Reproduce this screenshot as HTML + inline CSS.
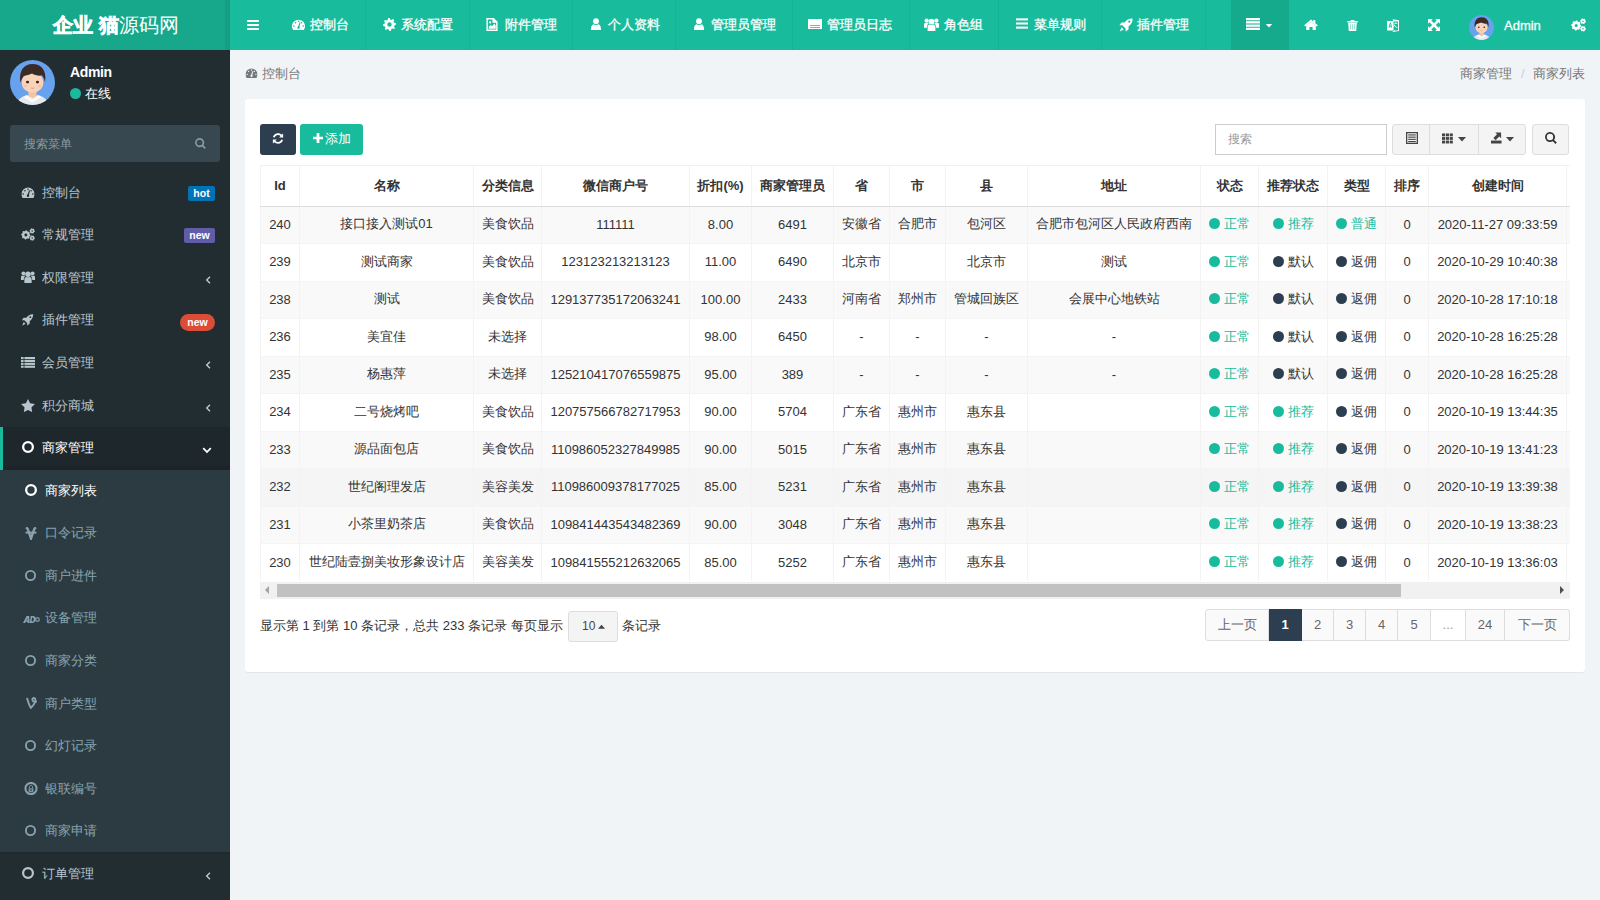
<!DOCTYPE html>
<html><head><meta charset="utf-8">
<style>
*{box-sizing:border-box;margin:0;padding:0}
html,body{width:1600px;height:900px;overflow:hidden}
body{font-family:"Liberation Sans",sans-serif;font-size:13px;color:#333;background:#f1f4f6;position:relative}
.abs{position:absolute}
svg{display:block}
#logo{left:0;top:0;width:230px;height:50px;background:linear-gradient(90deg,#17a88b 0,#17a88b 225px,#169e83 225px,#169e83 230px);color:#fff;font-size:20px;line-height:50px}
#nav{left:230px;top:0;width:1370px;height:50px;background:#18bc9c;color:#fff}
#nav .tx{-webkit-text-stroke:0.3px #fff}
.tab{position:absolute;top:0;height:50px;border-left:1px solid rgba(0,0,0,0.05)}
.ic{position:absolute}
.tx{position:absolute;white-space:nowrap}
#side{left:0;top:50px;width:230px;height:850px;background:#222d32;color:#b8c7ce}
.badge{position:absolute;color:#fff;font-weight:bold;font-size:10.5px;text-align:center;border-radius:2px;line-height:15px;height:15px}
#panel{left:245px;top:99px;width:1340px;height:573px;background:#fff;border-radius:3px;box-shadow:0 1px 1px rgba(0,0,0,0.06)}
#tbl{position:absolute;left:260px;top:165px;width:1310px;height:417px;overflow:hidden;border-top:1px solid #f0f0f0}
table{border-collapse:collapse;table-layout:fixed}
th{font-weight:bold;height:40px;padding-bottom:0 !important;border-left:1px solid #f3f3f3;border-bottom:1px solid #ddd;text-align:center;white-space:nowrap;overflow:hidden;color:#333;padding:0}
td{height:37.5px;padding-bottom:1px !important;border-left:1px solid #f3f3f3;border-top:1px solid #f4f4f4;text-align:center;white-space:nowrap;overflow:hidden;color:#333;padding:0}
tbody tr:nth-child(odd) td{background:#f9f9f9}
tbody tr:nth-child(8) td{background:#f5f5f5}
.g{color:#18bc9c}
.dot{display:inline-block;width:11px;height:11px;border-radius:50%;vertical-align:-1px;margin-right:4px}
.pg{position:absolute;top:609px;height:32px;border:1px solid #ddd;border-left:none;background:#fafafa;color:#666;text-align:center;line-height:29px;font-size:14px}
.btn{position:absolute;border-radius:3px}
</style></head><body>

<div id="logo" class="abs"><span class="tx" style="left:53px;top:0"><b style="-webkit-text-stroke:0.7px #fff">企业 猫</b>源码网</span></div>
<div id="nav" class="abs">
<div class="ic" style="left:17px;top:20px"><svg width="12" height="10" viewBox="0 0 14 12" fill="currentColor" ><rect x="0" y="0" width="14" height="2.4"/><rect x="0" y="4.8" width="14" height="2.4"/><rect x="0" y="9.6" width="14" height="2.4"/></svg></div>
<div class="ic" style="left:62px;top:19px"><svg width="13" height="11" viewBox="0 0 13.2 11" fill="currentColor" ><defs><mask id="dm1"><path fill="#fff" d="M1.2 11A6.6 6.6 0 1 1 12 11Z"/><g fill="#000"><circle cx="1.8" cy="7.0" r="0.8"/><circle cx="3.5" cy="3.7" r="0.8"/><circle cx="6.6" cy="2.2" r="0.8"/><circle cx="9.7" cy="3.7" r="0.8"/><circle cx="11.4" cy="7.0" r="0.8"/><circle cx="6.6" cy="8.7" r="1.2"/><path d="M5.9 8.5L7.7 3.3 8.6 3.6 7.3 8.9Z"/></g></mask></defs><rect width="13.2" height="11" mask="url(#dm1)"/></svg></div>
<span class="tx" style="left:80px;top:17px;line-height:16px">控制台</span>
<div class="abs" style="left:134.5px;top:0;width:1px;height:50px;background:rgba(0,0,0,0.05)"></div>
<div class="ic" style="left:153px;top:18px"><svg width="13" height="13" viewBox="0 0 13 13" fill="currentColor" ><path fill-rule="evenodd" d="M12.88,5.23 L13.00,6.50 L11.31,7.46 L11.03,8.38 L11.90,10.11 L11.10,11.10 L9.22,10.57 L8.38,11.03 L7.77,12.88 L6.50,13.00 L5.54,11.31 L4.62,11.03 L2.89,11.90 L1.90,11.10 L2.43,9.22 L1.97,8.38 L0.12,7.77 L0.00,6.50 L1.69,5.54 L1.97,4.62 L1.10,2.89 L1.90,1.90 L3.78,2.43 L4.62,1.97 L5.23,0.12 L6.50,0.00 L7.46,1.69 L8.38,1.97 L10.11,1.10 L11.10,1.90 L10.57,3.78 L11.03,4.62Z M6.5 4.3A2.2 2.2 0 1 0 6.5 8.7A2.2 2.2 0 1 0 6.5 4.3Z"/></svg></div>
<span class="tx" style="left:171px;top:17px;line-height:16px">系统配置</span>
<div class="abs" style="left:238.60000000000002px;top:0;width:1px;height:50px;background:rgba(0,0,0,0.05)"></div>
<div class="ic" style="left:256px;top:18px"><svg width="12" height="13" viewBox="0 0 12 14" fill="currentColor" ><path fill-rule="evenodd" d="M0 0h8l4 4v10H0z M1.5 1.5v11h9V5H6.5V1.5z"/><path d="M2.5 11.5v-2l2-2 1.5 1.5 2.5-3 1.5 2v3.5z"/><circle cx="4" cy="4.8" r="1.2"/></svg></div>
<span class="tx" style="left:274.5px;top:17px;line-height:16px">附件管理</span>
<div class="abs" style="left:341.70000000000005px;top:0;width:1px;height:50px;background:rgba(0,0,0,0.05)"></div>
<div class="ic" style="left:361px;top:18px"><svg width="10" height="12" viewBox="0 0 11 13" fill="currentColor" ><circle cx="5.5" cy="3.4" r="3.2"/><path d="M0 13c0-3.5 0.8-5.8 2.6-6.3 0.8 0.6 1.8 0.9 2.9 0.9s2.1-0.3 2.9-0.9C10.2 7.2 11 9.5 11 13z"/></svg></div>
<span class="tx" style="left:378px;top:17px;line-height:16px">个人资料</span>
<div class="abs" style="left:444.5px;top:0;width:1px;height:50px;background:rgba(0,0,0,0.05)"></div>
<div class="ic" style="left:464px;top:18px"><svg width="10" height="12" viewBox="0 0 11 13" fill="currentColor" ><circle cx="5.5" cy="3.4" r="3.2"/><path d="M0 13c0-3.5 0.8-5.8 2.6-6.3 0.8 0.6 1.8 0.9 2.9 0.9s2.1-0.3 2.9-0.9C10.2 7.2 11 9.5 11 13z"/></svg></div>
<span class="tx" style="left:481px;top:17px;line-height:16px">管理员管理</span>
<div class="abs" style="left:562px;top:0;width:1px;height:50px;background:rgba(0,0,0,0.05)"></div>
<div class="ic" style="left:578px;top:19px"><svg width="14" height="10" viewBox="0 0 14 10" fill="currentColor" ><path fill-rule="evenodd" d="M0 0h14v10H0z M2 6h10v0.8H2z M2 8h10v0.8H2z"/><path d="M2 3.5h10v0.6H2z" fill-opacity="0"/></svg></div>
<span class="tx" style="left:597px;top:17px;line-height:16px">管理员日志</span>
<div class="abs" style="left:678.5px;top:0;width:1px;height:50px;background:rgba(0,0,0,0.05)"></div>
<div class="ic" style="left:694px;top:18px"><svg width="15" height="13" viewBox="0 0 15 13" fill="currentColor" ><circle cx="7.5" cy="3.6" r="2.9"/><path d="M3.6 13V9.2c0-1.6 0.9-2.6 2.3-2.7 0.5 0.3 1 0.4 1.6 0.4s1.1-0.1 1.6-0.4c1.4 0.1 2.3 1.1 2.3 2.7V13z"/><circle cx="2.6" cy="2.6" r="2.1"/><circle cx="12.4" cy="2.6" r="2.1"/><path d="M0 9.8V6.6c0-1.1 0.7-1.8 1.6-1.8 0.3 0.2 0.6 0.3 1 0.3s0.7-0.1 1-0.3c0.5 0 0.9 0.2 1.2 0.5C3.7 6 3 7.3 3 9v0.8z"/><path d="M15 9.8V6.6c0-1.1-0.7-1.8-1.6-1.8-0.3 0.2-0.6 0.3-1 0.3s-0.7-0.1-1-0.3c-0.5 0-0.9 0.2-1.2 0.5C11.3 6 12 7.3 12 9v0.8z"/></svg></div>
<span class="tx" style="left:713.5px;top:17px;line-height:16px">角色组</span>
<div class="abs" style="left:767.6px;top:0;width:1px;height:50px;background:rgba(0,0,0,0.05)"></div>
<div class="ic" style="left:786px;top:18px"><svg width="12" height="11" viewBox="0 0 14 12" fill="currentColor" ><rect x="0" y="0" width="14" height="2.4"/><rect x="0" y="4.8" width="14" height="2.4"/><rect x="0" y="9.6" width="14" height="2.4"/></svg></div>
<span class="tx" style="left:804px;top:17px;line-height:16px">菜单规则</span>
<div class="abs" style="left:870.8px;top:0;width:1px;height:50px;background:rgba(0,0,0,0.05)"></div>
<div class="ic" style="left:889px;top:18px"><svg width="14" height="14" viewBox="0 0 14 14" fill="currentColor" ><path d="M13.6 0.4C10.5 0.2 7.6 1.6 5.6 4.4H2.5L0.4 7.3h2.9l3.3 3.3v2.9l2.9-2.1V8.4c2.8-2 4.2-4.9 4.1-8z M10.3 2.6a1.1 1.1 0 1 1 0 2.2a1.1 1.1 0 1 1 0-2.2z"/><path d="M2.6 9.3l2.1 2.1-3.9 2.2z"/></svg></div>
<span class="tx" style="left:907px;top:17px;line-height:16px">插件管理</span>
<div class="abs" style="left:974.7px;top:0;width:1px;height:50px;background:rgba(0,0,0,0.05)"></div>
<div class="abs" style="left:1001px;top:0;width:58px;height:50px;background:#16aa8d"></div>
<div class="ic" style="left:1016px;top:18px"><svg width="14" height="12" viewBox="0 0 14 12" fill="currentColor" ><rect x="0" y="0" width="14" height="2.3"/><rect x="0" y="3.2" width="14" height="2.3"/><rect x="0" y="6.5" width="14" height="2.3"/><rect x="0" y="9.7" width="14" height="2.3"/></svg></div>
<div class="ic" style="left:1035px;top:24px"><svg width="8" height="4" viewBox="0 0 8 5" fill="currentColor" ><path d="M0 0h8L4 4.5z"/></svg></div>
<div class="ic" style="left:1074px;top:19px"><svg width="14" height="11" viewBox="0 0 14 11" fill="currentColor" ><path d="M7 0.6L0.2 6.3l1 1.1L7 2.6l5.8 4.8 1-1.1L11.3 4.2V1h-2v1.5z"/><path d="M2.2 6.6L7 2.8l4.8 3.8V11H8.6V7.9H5.4V11H2.2z"/></svg></div>
<div class="ic" style="left:1117px;top:20px"><svg width="11" height="11" viewBox="0 0 11 11.5" fill="currentColor" ><path d="M3.8 0h3.4l0.5 1H11v1.5H0V1h3.3z"/><path fill-rule="evenodd" d="M1 3h9l-0.6 8.5H1.6z M3.2 4.5v5.5h0.7V4.5z M5.15 4.5v5.5h0.7V4.5z M7.1 4.5v5.5h0.7V4.5z" /><path d="M3.2 4.5v5.5h0.7V4.5z M5.15 4.5v5.5h0.7V4.5z M7.1 4.5v5.5h0.7V4.5z" fill-opacity="0.6"/></svg></div>
<div class="ic" style="left:1157px;top:19px"><svg width="12" height="13" viewBox="0 0 12 13" fill="currentColor" ><path fill-rule="evenodd" d="M0 2h6.5v9.5H0z M1.6 8.8l1.3-5h1l1.3 5H4.3L4 7.7H2.8l-0.3 1.1z M3 6.8h0.9L3.4 4.8z"/><path fill-rule="evenodd" d="M5.5 0.3L12 1.2v10.9l-6.5 0.9 1-1.5H11V2.4H6.5z M7.3 4h3v0.8h-3z M8.4 3.2h0.8v0.8H8.4z M7.6 5.4c0.5 1.3 1.4 2.3 2.9 2.8l-0.3 0.7C8.9 8.4 8.1 7.7 7.5 6.8c-0.4 0.7-0.9 1.3-1.6 1.8L5.6 8c1-0.7 1.5-1.5 1.7-2.6z"/></svg></div>
<div class="ic" style="left:1198px;top:19px"><svg width="12" height="12" viewBox="0 0 13 13" fill="currentColor" ><path d="M0 0h5.2L3.6 1.6 6.5 4.5 9.4 1.6 7.8 0H13v5.2L11.4 3.6 8.5 6.5l2.9 2.9 1.6-1.6V13H7.8l1.6-1.6L6.5 8.5 3.6 11.4 5.2 13H0V7.8l1.6 1.6L4.5 6.5 1.6 3.6 0 5.2z"/></svg></div>
<div class="ic" style="left:1239px;top:15px"><svg width="25" height="25" viewBox="0 0 100 100" fill="currentColor" ><defs><clipPath id="cp25"><circle cx="50" cy="50" r="50"/></clipPath></defs>
<circle cx="50" cy="50" r="50" fill="#66a2ee"/>
<g clip-path="url(#cp25)">
<path d="M14 100c3-12 10-18 22-21l14-2 14 2c12 3 19 9 22 21z" fill="#e9e9ec"/>
<path d="M41 62h18v18l-9 5-9-5z" fill="#f4c3a1"/>
<path d="M36 78l14 9 14-9 5 5-19 12-19-12z" fill="#fbfbfb"/>
<ellipse cx="50" cy="50" rx="24" ry="23" fill="#f9d3b9"/>
<path d="M23 50c-4-26 8-41 27-41s32 13 28 40c-2-7-4-12-7-15-6 2-16 0-22-4-5 3-13 4-19 6-3 4-5 9-7 14z" fill="#3b2a26"/>
<ellipse cx="39" cy="49" rx="3.6" ry="3" fill="#3b2a26"/><ellipse cx="61" cy="49" rx="3.6" ry="3" fill="#3b2a26"/>
<path d="M46 62q4 2 8 0" stroke="#d8957a" stroke-width="2" fill="none"/>
<ellipse cx="34" cy="58" rx="4" ry="2.4" fill="#f6b5a0" opacity=".7"/><ellipse cx="66" cy="58" rx="4" ry="2.4" fill="#f6b5a0" opacity=".7"/>
</g></svg></div>
<span class="tx" style="left:1274px;top:18px;line-height:16px;font-size:13px">Admin</span>
<div class="ic" style="left:1341px;top:18px"><svg width="15" height="14" viewBox="0 0 15 14" fill="currentColor" ><path fill-rule="evenodd" d="M10.20,7.50 L10.10,8.48 L9.08,9.11 L8.69,9.83 L8.74,11.04 L7.98,11.66 L6.81,11.38 L6.02,11.62 L5.20,12.50 L4.22,12.40 L3.59,11.38 L2.87,10.99 L1.66,11.04 L1.04,10.28 L1.32,9.11 L1.08,8.32 L0.20,7.50 L0.30,6.52 L1.32,5.89 L1.71,5.17 L1.66,3.96 L2.42,3.34 L3.59,3.62 L4.38,3.38 L5.20,2.50 L6.18,2.60 L6.81,3.62 L7.53,4.01 L8.74,3.96 L9.36,4.72 L9.08,5.89 L9.32,6.68Z M6.80,7.50A1.6 1.6 0 1 0 3.60,7.50A1.6 1.6 0 1 0 6.80,7.50Z"/><path fill-rule="evenodd" d="M14.90,3.20 L14.80,3.95 L14.08,4.40 L13.70,4.90 L13.45,5.71 L12.75,6.00 L12.00,5.60 L11.38,5.52 L10.55,5.71 L9.95,5.25 L9.92,4.40 L9.68,3.82 L9.10,3.20 L9.20,2.45 L9.92,2.00 L10.30,1.50 L10.55,0.69 L11.25,0.40 L12.00,0.80 L12.62,0.88 L13.45,0.69 L14.05,1.15 L14.08,2.00 L14.32,2.58Z M12.80,3.20A0.8 0.8 0 1 0 11.20,3.20A0.8 0.8 0 1 0 12.80,3.20Z"/><path fill-rule="evenodd" d="M14.90,10.80 L14.80,11.55 L14.08,12.00 L13.70,12.50 L13.45,13.31 L12.75,13.60 L12.00,13.20 L11.38,13.12 L10.55,13.31 L9.95,12.85 L9.92,12.00 L9.68,11.42 L9.10,10.80 L9.20,10.05 L9.92,9.60 L10.30,9.10 L10.55,8.29 L11.25,8.00 L12.00,8.40 L12.62,8.48 L13.45,8.29 L14.05,8.75 L14.08,9.60 L14.32,10.18Z M12.80,10.80A0.8 0.8 0 1 0 11.20,10.80A0.8 0.8 0 1 0 12.80,10.80Z"/></svg></div>
</div>
<div id="side" class="abs">
<div class="ic" style="left:10px;top:10px"><svg width="45" height="45" viewBox="0 0 100 100" fill="currentColor" ><defs><clipPath id="cp45"><circle cx="50" cy="50" r="50"/></clipPath></defs>
<circle cx="50" cy="50" r="50" fill="#66a2ee"/>
<g clip-path="url(#cp45)">
<path d="M14 100c3-12 10-18 22-21l14-2 14 2c12 3 19 9 22 21z" fill="#e9e9ec"/>
<path d="M41 62h18v18l-9 5-9-5z" fill="#f4c3a1"/>
<path d="M36 78l14 9 14-9 5 5-19 12-19-12z" fill="#fbfbfb"/>
<ellipse cx="50" cy="50" rx="24" ry="23" fill="#f9d3b9"/>
<path d="M23 50c-4-26 8-41 27-41s32 13 28 40c-2-7-4-12-7-15-6 2-16 0-22-4-5 3-13 4-19 6-3 4-5 9-7 14z" fill="#3b2a26"/>
<ellipse cx="39" cy="49" rx="3.6" ry="3" fill="#3b2a26"/><ellipse cx="61" cy="49" rx="3.6" ry="3" fill="#3b2a26"/>
<path d="M46 62q4 2 8 0" stroke="#d8957a" stroke-width="2" fill="none"/>
<ellipse cx="34" cy="58" rx="4" ry="2.4" fill="#f6b5a0" opacity=".7"/><ellipse cx="66" cy="58" rx="4" ry="2.4" fill="#f6b5a0" opacity=".7"/>
</g></svg></div>
<span class="tx" style="left:70px;top:14px;line-height:16px;font-size:14px;font-weight:bold;color:#fff;letter-spacing:-0.35px">Admin</span>
<div class="abs" style="left:70px;top:38px;width:11px;height:11px;border-radius:50%;background:#18bc9c"></div>
<span class="tx" style="left:85px;top:36px;line-height:16px;font-size:13px;color:#fff">在线</span>
<div class="abs" style="left:10px;top:75px;width:210px;height:37px;background:#374850;border-radius:3px"></div>
<span class="tx" style="left:24px;top:86px;line-height:16px;font-size:12px;color:#8b9ba2">搜索菜单</span>
<div class="ic" style="left:195px;top:88px;color:#8b9ba2"><svg width="11" height="11" viewBox="0 0 12 12" fill="currentColor" ><path fill-rule="evenodd" d="M5 0a5 5 0 0 1 4.1 7.9l2.7 2.7-1.3 1.3-2.7-2.7A5 5 0 1 1 5 0z M5 1.8a3.2 3.2 0 1 0 0 6.4a3.2 3.2 0 1 0 0-6.4z"/></svg></div>
<div class="ic" style="left:21px;top:136.7px;color:#b8c7ce"><svg width="14" height="11" viewBox="0 0 13.2 11" fill="currentColor" ><defs><mask id="dm2"><path fill="#fff" d="M1.2 11A6.6 6.6 0 1 1 12 11Z"/><g fill="#000"><circle cx="1.8" cy="7.0" r="0.8"/><circle cx="3.5" cy="3.7" r="0.8"/><circle cx="6.6" cy="2.2" r="0.8"/><circle cx="9.7" cy="3.7" r="0.8"/><circle cx="11.4" cy="7.0" r="0.8"/><circle cx="6.6" cy="8.7" r="1.2"/><path d="M5.9 8.5L7.7 3.3 8.6 3.6 7.3 8.9Z"/></g></mask></defs><rect width="13.2" height="11" mask="url(#dm2)"/></svg></div>
<span class="tx" style="left:42px;top:133.7px;line-height:17px;color:#b8c7ce">控制台</span>
<span class="badge" style="left:188px;top:135.7px;width:27px;background:#0073b7">hot</span>
<div class="ic" style="left:21px;top:178.26999999999998px;color:#b8c7ce"><svg width="14" height="13" viewBox="0 0 15 14" fill="currentColor" ><path fill-rule="evenodd" d="M10.20,7.50 L10.10,8.48 L9.08,9.11 L8.69,9.83 L8.74,11.04 L7.98,11.66 L6.81,11.38 L6.02,11.62 L5.20,12.50 L4.22,12.40 L3.59,11.38 L2.87,10.99 L1.66,11.04 L1.04,10.28 L1.32,9.11 L1.08,8.32 L0.20,7.50 L0.30,6.52 L1.32,5.89 L1.71,5.17 L1.66,3.96 L2.42,3.34 L3.59,3.62 L4.38,3.38 L5.20,2.50 L6.18,2.60 L6.81,3.62 L7.53,4.01 L8.74,3.96 L9.36,4.72 L9.08,5.89 L9.32,6.68Z M6.80,7.50A1.6 1.6 0 1 0 3.60,7.50A1.6 1.6 0 1 0 6.80,7.50Z"/><path fill-rule="evenodd" d="M14.90,3.20 L14.80,3.95 L14.08,4.40 L13.70,4.90 L13.45,5.71 L12.75,6.00 L12.00,5.60 L11.38,5.52 L10.55,5.71 L9.95,5.25 L9.92,4.40 L9.68,3.82 L9.10,3.20 L9.20,2.45 L9.92,2.00 L10.30,1.50 L10.55,0.69 L11.25,0.40 L12.00,0.80 L12.62,0.88 L13.45,0.69 L14.05,1.15 L14.08,2.00 L14.32,2.58Z M12.80,3.20A0.8 0.8 0 1 0 11.20,3.20A0.8 0.8 0 1 0 12.80,3.20Z"/><path fill-rule="evenodd" d="M14.90,10.80 L14.80,11.55 L14.08,12.00 L13.70,12.50 L13.45,13.31 L12.75,13.60 L12.00,13.20 L11.38,13.12 L10.55,13.31 L9.95,12.85 L9.92,12.00 L9.68,11.42 L9.10,10.80 L9.20,10.05 L9.92,9.60 L10.30,9.10 L10.55,8.29 L11.25,8.00 L12.00,8.40 L12.62,8.48 L13.45,8.29 L14.05,8.75 L14.08,9.60 L14.32,10.18Z M12.80,10.80A0.8 0.8 0 1 0 11.20,10.80A0.8 0.8 0 1 0 12.80,10.80Z"/></svg></div>
<span class="tx" style="left:42px;top:176.26999999999998px;line-height:17px;color:#b8c7ce">常规管理</span>
<span class="badge" style="left:184px;top:178.26999999999998px;width:31px;background:#605ca8">new</span>
<div class="ic" style="left:21px;top:219.83999999999997px;color:#b8c7ce"><svg width="14" height="14" viewBox="0 0 15 13" fill="currentColor" ><circle cx="7.5" cy="3.6" r="2.9"/><path d="M3.6 13V9.2c0-1.6 0.9-2.6 2.3-2.7 0.5 0.3 1 0.4 1.6 0.4s1.1-0.1 1.6-0.4c1.4 0.1 2.3 1.1 2.3 2.7V13z"/><circle cx="2.6" cy="2.6" r="2.1"/><circle cx="12.4" cy="2.6" r="2.1"/><path d="M0 9.8V6.6c0-1.1 0.7-1.8 1.6-1.8 0.3 0.2 0.6 0.3 1 0.3s0.7-0.1 1-0.3c0.5 0 0.9 0.2 1.2 0.5C3.7 6 3 7.3 3 9v0.8z"/><path d="M15 9.8V6.6c0-1.1-0.7-1.8-1.6-1.8-0.3 0.2-0.6 0.3-1 0.3s-0.7-0.1-1-0.3c-0.5 0-0.9 0.2-1.2 0.5C11.3 6 12 7.3 12 9v0.8z"/></svg></div>
<span class="tx" style="left:42px;top:218.83999999999997px;line-height:17px;color:#b8c7ce">权限管理</span>
<div class="ic" style="left:205px;top:224.83999999999997px;color:#b8c7ce"><svg width="6" height="10" viewBox="0 0 7 10" fill="currentColor" ><path d="M5.2 0.6L6.4 1.8 3.2 5l3.2 3.2-1.2 1.2L0.8 5z"/></svg></div>
<div class="ic" style="left:21px;top:264.40999999999997px;color:#b8c7ce"><svg width="13" height="12" viewBox="0 0 14 14" fill="currentColor" ><path d="M13.6 0.4C10.5 0.2 7.6 1.6 5.6 4.4H2.5L0.4 7.3h2.9l3.3 3.3v2.9l2.9-2.1V8.4c2.8-2 4.2-4.9 4.1-8z M10.3 2.6a1.1 1.1 0 1 1 0 2.2a1.1 1.1 0 1 1 0-2.2z"/><path d="M2.6 9.3l2.1 2.1-3.9 2.2z"/></svg></div>
<span class="tx" style="left:42px;top:261.40999999999997px;line-height:17px;color:#b8c7ce">插件管理</span>
<span class="badge" style="left:180px;top:264.40999999999997px;width:35px;height:17px;line-height:17px;border-radius:9px;background:#dd4b39">new</span>
<div class="ic" style="left:21px;top:306.98px;color:#b8c7ce"><svg width="14" height="11" viewBox="0 0 14 11" fill="currentColor" ><rect x="0" y="0.0" width="2.6" height="2.1"/><rect x="3.4" y="0.0" width="10.6" height="2.1"/><rect x="0" y="2.9" width="2.6" height="2.1"/><rect x="3.4" y="2.9" width="10.6" height="2.1"/><rect x="0" y="5.8" width="2.6" height="2.1"/><rect x="3.4" y="5.8" width="10.6" height="2.1"/><rect x="0" y="8.7" width="2.6" height="2.1"/><rect x="3.4" y="8.7" width="10.6" height="2.1"/></svg></div>
<span class="tx" style="left:42px;top:303.98px;line-height:17px;color:#b8c7ce">会员管理</span>
<div class="ic" style="left:205px;top:309.98px;color:#b8c7ce"><svg width="6" height="10" viewBox="0 0 7 10" fill="currentColor" ><path d="M5.2 0.6L6.4 1.8 3.2 5l3.2 3.2-1.2 1.2L0.8 5z"/></svg></div>
<div class="ic" style="left:21px;top:348.54999999999995px;color:#b8c7ce"><svg width="14" height="13" viewBox="0 0 14 13" fill="currentColor" ><path d="M7 0l2.1 4.3 4.8 0.7-3.5 3.4 0.8 4.7L7 10.9 2.8 13.1l0.8-4.7L0.1 5l4.8-0.7z"/></svg></div>
<span class="tx" style="left:42px;top:346.54999999999995px;line-height:17px;color:#b8c7ce">积分商城</span>
<div class="ic" style="left:205px;top:352.54999999999995px;color:#b8c7ce"><svg width="6" height="10" viewBox="0 0 7 10" fill="currentColor" ><path d="M5.2 0.6L6.4 1.8 3.2 5l3.2 3.2-1.2 1.2L0.8 5z"/></svg></div>
<div class="abs" style="left:0;top:376.62px;width:230px;height:43.5px;background:#1e282c;border-left:3px solid #18bc9c"></div>
<div class="abs" style="left:3px;top:416.12px;width:227px;height:4px;background:#1c2429"></div>
<div class="ic" style="left:22px;top:391.12px;color:#fff"><svg width="12" height="12" viewBox="0 0 12 12" fill="currentColor" ><circle cx="6" cy="6" r="4.85" fill="none" stroke="currentColor" stroke-width="2.3"/></svg></div>
<span class="tx" style="left:42px;top:389.12px;line-height:17px;color:#fff">商家管理</span>
<div class="ic" style="left:202px;top:397.12px;color:#fff"><svg width="10" height="7" viewBox="0 0 10 7" fill="currentColor" ><path d="M0.6 1.8L1.8 0.6 5 3.8 8.2 0.6 9.4 1.8 5 6.2z"/></svg></div>
<div class="abs" style="left:0;top:419.99px;width:230px;height:381.83px;background:#2c3b41"></div>
<div class="ic" style="left:25px;top:433.69px;color:#fff"><svg width="12" height="12" viewBox="0 0 12 12" fill="currentColor" ><circle cx="6" cy="6" r="4.85" fill="none" stroke="currentColor" stroke-width="2.3"/></svg></div>
<span class="tx" style="left:45px;top:431.69px;line-height:17px;color:#fff">商家列表</span>
<div class="ic" style="left:25px;top:477.26px;color:#8aa4af"><svg width="12" height="13" viewBox="0 0 12 13" fill="currentColor" ><path fill="none" stroke="currentColor" stroke-width="2.3" d="M0.9 0.6Q2.6 1.2 3 2.6L6 11.6 9 2.6Q9.4 1.2 11.1 0.6"/><rect x="0.6" y="4.6" width="10.8" height="2" /></svg></div>
<span class="tx" style="left:45px;top:474.26px;line-height:17px;color:#8aa4af">口令记录</span>
<div class="ic" style="left:25px;top:519.8299999999999px;color:#8aa4af"><svg width="11" height="11" viewBox="0 0 12 12" fill="currentColor" ><circle cx="6" cy="6" r="5.0" fill="none" stroke="currentColor" stroke-width="2"/></svg></div>
<span class="tx" style="left:45px;top:516.8299999999999px;line-height:17px;color:#8aa4af">商户进件</span>
<div class="ic" style="left:23px;top:566.4px;color:#8aa4af"><svg width="17" height="7" viewBox="0 0 17 7" fill="currentColor" ><path fill-rule="evenodd" d="M0 7L3.6 0H6.1L6.7 7H4.7L4.6 5.8H2.7L2.1 7Z M3.3 4.4H4.5L4.4 2Z"/><path fill-rule="evenodd" d="M6.9 7L7.7 0H10C12 0 12.9 1.5 12.7 3.5 12.4 5.7 11.1 7 9.1 7Z M9 1.4L8.6 5.6H9.1C10.1 5.6 10.7 4.8 10.8 3.5 10.9 2.2 10.4 1.4 9.7 1.4Z"/><path fill-rule="evenodd" d="M14.4 1A2.5 2.5 0 1 1 14.4 6A2.5 2.5 0 1 1 14.4 1Z M14.4 2.4A1.1 1.1 0 1 0 14.4 4.6A1.1 1.1 0 1 0 14.4 2.4Z" fill-opacity="0.8"/></svg></div>
<span class="tx" style="left:45px;top:559.4px;line-height:17px;color:#8aa4af">设备管理</span>
<div class="ic" style="left:25px;top:604.97px;color:#8aa4af"><svg width="11" height="11" viewBox="0 0 12 12" fill="currentColor" ><circle cx="6" cy="6" r="5.0" fill="none" stroke="currentColor" stroke-width="2"/></svg></div>
<span class="tx" style="left:45px;top:601.97px;line-height:17px;color:#8aa4af">商家分类</span>
<div class="ic" style="left:26px;top:646.54px;color:#8aa4af"><svg width="11" height="12" viewBox="0 0 11 12" fill="currentColor" ><path fill="none" stroke="currentColor" stroke-width="1.9" stroke-linecap="round" d="M1.2 1.6C2.2 5.2 3.2 8.6 4.9 10.9 7.4 8.4 9.3 5.4 9.4 3.2 9.5 1.5 8.6 0.9 7.7 1 6.6 1.1 6.2 2.2 6.5 3.3 6.9 4.7 8.4 5.1 10.2 4.6"/></svg></div>
<span class="tx" style="left:45px;top:644.54px;line-height:17px;color:#8aa4af">商户类型</span>
<div class="ic" style="left:25px;top:690.11px;color:#8aa4af"><svg width="11" height="11" viewBox="0 0 12 12" fill="currentColor" ><circle cx="6" cy="6" r="5.0" fill="none" stroke="currentColor" stroke-width="2"/></svg></div>
<span class="tx" style="left:45px;top:687.11px;line-height:17px;color:#8aa4af">幻灯记录</span>
<div class="ic" style="left:24px;top:731.6800000000001px;color:#8aa4af"><svg width="14" height="13" viewBox="0 0 14 13" fill="currentColor" ><circle cx="7" cy="6.5" r="5.6" fill="none" stroke="currentColor" stroke-width="2"/><path fill-rule="evenodd" d="M4.6 6.2h4.8v4H4.6z M6.4 7.3h1.2v1.8H6.4z" fill-opacity="0.85"/><path fill="none" stroke="currentColor" stroke-width="1" stroke-opacity="0.85" d="M5.5 6.2V4.8C5.5 3.9 6.1 3.3 7 3.3S8.5 3.9 8.5 4.8V6.2"/></svg></div>
<span class="tx" style="left:45px;top:729.6800000000001px;line-height:17px;color:#8aa4af">银联编号</span>
<div class="ic" style="left:25px;top:775.25px;color:#8aa4af"><svg width="11" height="11" viewBox="0 0 12 12" fill="currentColor" ><circle cx="6" cy="6" r="5.0" fill="none" stroke="currentColor" stroke-width="2"/></svg></div>
<span class="tx" style="left:45px;top:772.25px;line-height:17px;color:#8aa4af">商家申请</span>
<div class="abs" style="left:0;top:801.8199999999999px;width:230px;height:2px;background:#1f292e"></div>
<div class="ic" style="left:22px;top:816.8199999999999px;color:#b8c7ce"><svg width="12" height="12" viewBox="0 0 12 12" fill="currentColor" ><circle cx="6" cy="6" r="4.9" fill="none" stroke="currentColor" stroke-width="2.2"/></svg></div>
<span class="tx" style="left:42px;top:814.8199999999999px;line-height:17px;color:#b8c7ce">订单管理</span>
<div class="ic" style="left:205px;top:820.8199999999999px;color:#b8c7ce"><svg width="6" height="10" viewBox="0 0 7 10" fill="currentColor" ><path d="M5.2 0.6L6.4 1.8 3.2 5l3.2 3.2-1.2 1.2L0.8 5z"/></svg></div>
</div>
<div class="ic" style="left:245px;top:68px;color:#777"><svg width="13" height="10" viewBox="0 0 13.2 11" fill="currentColor" ><defs><mask id="dm3"><path fill="#fff" d="M1.2 11A6.6 6.6 0 1 1 12 11Z"/><g fill="#000"><circle cx="1.8" cy="7.0" r="0.8"/><circle cx="3.5" cy="3.7" r="0.8"/><circle cx="6.6" cy="2.2" r="0.8"/><circle cx="9.7" cy="3.7" r="0.8"/><circle cx="11.4" cy="7.0" r="0.8"/><circle cx="6.6" cy="8.7" r="1.2"/><path d="M5.9 8.5L7.7 3.3 8.6 3.6 7.3 8.9Z"/></g></mask></defs><rect width="13.2" height="11" mask="url(#dm3)"/></svg></div>
<span class="tx" style="left:262px;top:66px;line-height:16px;color:#777">控制台</span>
<span class="tx" style="left:1460px;top:66px;line-height:16px;color:#777">商家管理</span>
<span class="tx" style="left:1521px;top:66px;line-height:16px;color:#ccc">/</span>
<span class="tx" style="left:1533px;top:66px;line-height:16px;color:#777">商家列表</span>
<div id="panel" class="abs"></div>
<div class="btn" style="left:260px;top:124px;width:36px;height:31px;background:#2c3e50;color:#fff"><div class="ic" style="left:12px;top:9px"><svg width="12" height="11" viewBox="0 0 12 12" fill="currentColor" ><path d="M11.6 0.6v4.3H7.3l1.6-1.6C8.1 2.6 7.1 2.2 6 2.2c-1.7 0-3.1 1.1-3.6 2.6L0.5 4.3C1.2 1.8 3.4 0.2 6 0.2c1.6 0 3 0.6 4.1 1.6z"/><path d="M0.4 11.4V7.1h4.3L3.1 8.7C3.9 9.4 4.9 9.8 6 9.8c1.7 0 3.1-1.1 3.6-2.6l1.9 0.5C10.8 10.2 8.6 11.8 6 11.8c-1.6 0-3-0.6-4.1-1.6z"/></svg></div></div>
<div class="btn" style="left:300px;top:124px;width:63px;height:31px;background:#18bc9c;color:#fff"><div class="ic" style="left:13px;top:9px"><svg width="10" height="10" viewBox="0 0 11 11" fill="currentColor" ><path d="M4 0h3v4h4v3H7v4H4V7H0V4h4z"/></svg></div><span class="tx" style="left:25px;top:7px;line-height:16px">添加</span></div>
<div class="abs" style="left:1215px;top:124px;width:172px;height:31px;border:1px solid #ccc;background:#fff"></div>
<span class="tx" style="left:1228px;top:131px;line-height:16px;font-size:12px;color:#999">搜索</span>
<div class="btn" style="left:1392px;top:124px;width:134px;height:31px;background:#f4f4f4;border:1px solid #ddd"></div>
<div class="abs" style="left:1429px;top:125px;width:1px;height:29px;background:#ddd"></div>
<div class="abs" style="left:1478px;top:125px;width:1px;height:29px;background:#ddd"></div>
<div class="ic" style="left:1406px;top:132px;color:#444"><svg width="12" height="12" viewBox="0 0 12 12" fill="currentColor" ><path fill-rule="evenodd" d="M0 0h12v12H0z M1.3 1.3v9.4h9.4V1.3z"/><rect x="2.2" y="2.4" width="7.6" height="1.1"/><rect x="2.2" y="4.6" width="7.6" height="1.1"/><rect x="2.2" y="6.8" width="7.6" height="1.1"/><rect x="2.2" y="9" width="7.6" height="1.1"/></svg></div>
<div class="ic" style="left:1442px;top:133px;color:#444"><svg width="11" height="11" viewBox="0 0 12 11" fill="currentColor" ><rect x="0.0" y="0.0" width="3.4" height="3.1"/><rect x="4.2" y="0.0" width="3.4" height="3.1"/><rect x="8.4" y="0.0" width="3.4" height="3.1"/><rect x="0.0" y="3.9" width="3.4" height="3.1"/><rect x="4.2" y="3.9" width="3.4" height="3.1"/><rect x="8.4" y="3.9" width="3.4" height="3.1"/><rect x="0.0" y="7.8" width="3.4" height="3.1"/><rect x="4.2" y="7.8" width="3.4" height="3.1"/><rect x="8.4" y="7.8" width="3.4" height="3.1"/></svg></div>
<div class="ic" style="left:1458px;top:137px;color:#444"><svg width="8" height="5" viewBox="0 0 8 5" fill="currentColor" ><path d="M0 0h8L4 4.5z"/></svg></div>
<div class="ic" style="left:1491px;top:132px;color:#444"><svg width="11" height="12" viewBox="0 0 12 12" fill="currentColor" ><path d="M0 8.8h11.5V12H0z"/><path d="M4.6 0h6.4v6.4L9 4.4 5 8.4 2.6 6 6.6 2z"/></svg></div>
<div class="ic" style="left:1506px;top:137px;color:#444"><svg width="8" height="5" viewBox="0 0 8 5" fill="currentColor" ><path d="M0 0h8L4 4.5z"/></svg></div>
<div class="btn" style="left:1532px;top:124px;width:37px;height:31px;background:#f4f4f4;border:1px solid #ddd"></div>
<div class="ic" style="left:1545px;top:132px;color:#333"><svg width="12" height="12" viewBox="0 0 12 12" fill="currentColor" ><path fill-rule="evenodd" d="M5 0a5 5 0 0 1 4.1 7.9l2.7 2.7-1.3 1.3-2.7-2.7A5 5 0 1 1 5 0z M5 1.8a3.2 3.2 0 1 0 0 6.4a3.2 3.2 0 1 0 0-6.4z"/></svg></div>
<div id="tbl">
<table style="width:1486px"><colgroup><col style="width:39px"><col style="width:174px"><col style="width:68px"><col style="width:148px"><col style="width:62px"><col style="width:82px"><col style="width:56px"><col style="width:56px"><col style="width:82px"><col style="width:173px"><col style="width:58px"><col style="width:69px"><col style="width:58px"><col style="width:43px"><col style="width:138px"><col style="width:180px"></colgroup>
<thead><tr><th>Id</th><th>名称</th><th>分类信息</th><th>微信商户号</th><th>折扣(%)</th><th>商家管理员</th><th>省</th><th>市</th><th>县</th><th>地址</th><th>状态</th><th>推荐状态</th><th>类型</th><th>排序</th><th>创建时间</th><th>操作</th></tr></thead><tbody>
<tr><td>240</td><td>接口接入测试01</td><td>美食饮品</td><td>111111</td><td>8.00</td><td>6491</td><td>安徽省</td><td>合肥市</td><td>包河区</td><td>合肥市包河区人民政府西南</td><td><span class="g"><span class="dot" style="background:#18bc9c"></span>正常</span></td><td><span class="g"><span class="dot" style="background:#18bc9c"></span>推荐</span></td><td><span class="g"><span class="dot" style="background:#18bc9c"></span>普通</span></td><td>0</td><td>2020-11-27 09:33:59</td><td></td></tr>
<tr><td>239</td><td>测试商家</td><td>美食饮品</td><td>123123213213123</td><td>11.00</td><td>6490</td><td>北京市</td><td></td><td>北京市</td><td>测试</td><td><span class="g"><span class="dot" style="background:#18bc9c"></span>正常</span></td><td><span><span class="dot" style="background:#2c3e50"></span>默认</span></td><td><span><span class="dot" style="background:#2c3e50"></span>返佣</span></td><td>0</td><td>2020-10-29 10:40:38</td><td></td></tr>
<tr><td>238</td><td>测试</td><td>美食饮品</td><td>129137735172063241</td><td>100.00</td><td>2433</td><td>河南省</td><td>郑州市</td><td>管城回族区</td><td>会展中心地铁站</td><td><span class="g"><span class="dot" style="background:#18bc9c"></span>正常</span></td><td><span><span class="dot" style="background:#2c3e50"></span>默认</span></td><td><span><span class="dot" style="background:#2c3e50"></span>返佣</span></td><td>0</td><td>2020-10-28 17:10:18</td><td></td></tr>
<tr><td>236</td><td>美宜佳</td><td>未选择</td><td></td><td>98.00</td><td>6450</td><td>-</td><td>-</td><td>-</td><td>-</td><td><span class="g"><span class="dot" style="background:#18bc9c"></span>正常</span></td><td><span><span class="dot" style="background:#2c3e50"></span>默认</span></td><td><span><span class="dot" style="background:#2c3e50"></span>返佣</span></td><td>0</td><td>2020-10-28 16:25:28</td><td></td></tr>
<tr><td>235</td><td>杨惠萍</td><td>未选择</td><td>125210417076559875</td><td>95.00</td><td>389</td><td>-</td><td>-</td><td>-</td><td>-</td><td><span class="g"><span class="dot" style="background:#18bc9c"></span>正常</span></td><td><span><span class="dot" style="background:#2c3e50"></span>默认</span></td><td><span><span class="dot" style="background:#2c3e50"></span>返佣</span></td><td>0</td><td>2020-10-28 16:25:28</td><td></td></tr>
<tr><td>234</td><td>二号烧烤吧</td><td>美食饮品</td><td>120757566782717953</td><td>90.00</td><td>5704</td><td>广东省</td><td>惠州市</td><td>惠东县</td><td></td><td><span class="g"><span class="dot" style="background:#18bc9c"></span>正常</span></td><td><span class="g"><span class="dot" style="background:#18bc9c"></span>推荐</span></td><td><span><span class="dot" style="background:#2c3e50"></span>返佣</span></td><td>0</td><td>2020-10-19 13:44:35</td><td></td></tr>
<tr><td>233</td><td>源品面包店</td><td>美食饮品</td><td>110986052327849985</td><td>90.00</td><td>5015</td><td>广东省</td><td>惠州市</td><td>惠东县</td><td></td><td><span class="g"><span class="dot" style="background:#18bc9c"></span>正常</span></td><td><span class="g"><span class="dot" style="background:#18bc9c"></span>推荐</span></td><td><span><span class="dot" style="background:#2c3e50"></span>返佣</span></td><td>0</td><td>2020-10-19 13:41:23</td><td></td></tr>
<tr><td>232</td><td>世纪阁理发店</td><td>美容美发</td><td>110986009378177025</td><td>85.00</td><td>5231</td><td>广东省</td><td>惠州市</td><td>惠东县</td><td></td><td><span class="g"><span class="dot" style="background:#18bc9c"></span>正常</span></td><td><span class="g"><span class="dot" style="background:#18bc9c"></span>推荐</span></td><td><span><span class="dot" style="background:#2c3e50"></span>返佣</span></td><td>0</td><td>2020-10-19 13:39:38</td><td></td></tr>
<tr><td>231</td><td>小茶里奶茶店</td><td>美食饮品</td><td>109841443543482369</td><td>90.00</td><td>3048</td><td>广东省</td><td>惠州市</td><td>惠东县</td><td></td><td><span class="g"><span class="dot" style="background:#18bc9c"></span>正常</span></td><td><span class="g"><span class="dot" style="background:#18bc9c"></span>推荐</span></td><td><span><span class="dot" style="background:#2c3e50"></span>返佣</span></td><td>0</td><td>2020-10-19 13:38:23</td><td></td></tr>
<tr><td>230</td><td>世纪陆壹捌美妆形象设计店</td><td>美容美发</td><td>109841555212632065</td><td>85.00</td><td>5252</td><td>广东省</td><td>惠州市</td><td>惠东县</td><td></td><td><span class="g"><span class="dot" style="background:#18bc9c"></span>正常</span></td><td><span class="g"><span class="dot" style="background:#18bc9c"></span>推荐</span></td><td><span><span class="dot" style="background:#2c3e50"></span>返佣</span></td><td>0</td><td>2020-10-19 13:36:03</td><td></td></tr>
</tbody></table></div>
<div class="abs" style="left:260px;top:582px;width:1310px;height:17px;background:#f1f1f1"></div>
<div class="abs" style="left:277px;top:584px;width:1124px;height:13px;background:#c1c1c1"></div>
<div class="abs" style="left:265px;top:586px;width:0;height:0;border-top:4px solid transparent;border-bottom:4px solid transparent;border-right:4px solid #a3a3a3"></div>
<div class="abs" style="left:1560px;top:586px;width:0;height:0;border-top:4px solid transparent;border-bottom:4px solid transparent;border-left:4px solid #505050"></div>
<span class="tx" style="left:260px;top:618px;line-height:16px;color:#333">显示第 1 到第 10 条记录，总共 233 条记录 每页显示</span>
<div class="btn" style="left:568px;top:611px;width:50px;height:31px;background:#f4f4f4;border:1px solid #ddd"><span class="tx" style="left:13px;top:6px;line-height:16px;font-size:12px;color:#444">10</span><div class="ic" style="left:29px;top:12px;color:#444"><svg width="7" height="5" viewBox="0 0 8 5" fill="currentColor" ><path d="M0 5h8L4 0.5z"/></svg></div></div>
<span class="tx" style="left:622px;top:618px;line-height:16px;color:#333">条记录</span>
<div class="pg" style="left:1205px;width:64px;border-left:1px solid #ddd;border-radius:3px 0 0 3px;font-size:13px">上一页</div>
<div class="pg" style="left:1269px;width:33px;background:#2c3e50;border-color:#2c3e50;color:#fff;font-weight:bold;font-size:13px">1</div>
<div class="pg" style="left:1302px;width:32px;font-size:13px">2</div>
<div class="pg" style="left:1334px;width:32px;font-size:13px">3</div>
<div class="pg" style="left:1366px;width:32px;font-size:13px">4</div>
<div class="pg" style="left:1398px;width:33px;font-size:13px">5</div>
<div class="pg" style="left:1431px;width:35px;background:#fff;color:#999;font-size:13px">...</div>
<div class="pg" style="left:1466px;width:39px;font-size:13px">24</div>
<div class="pg" style="left:1505px;width:65px;border-radius:0 3px 3px 0;font-size:13px">下一页</div>
</body></html>
